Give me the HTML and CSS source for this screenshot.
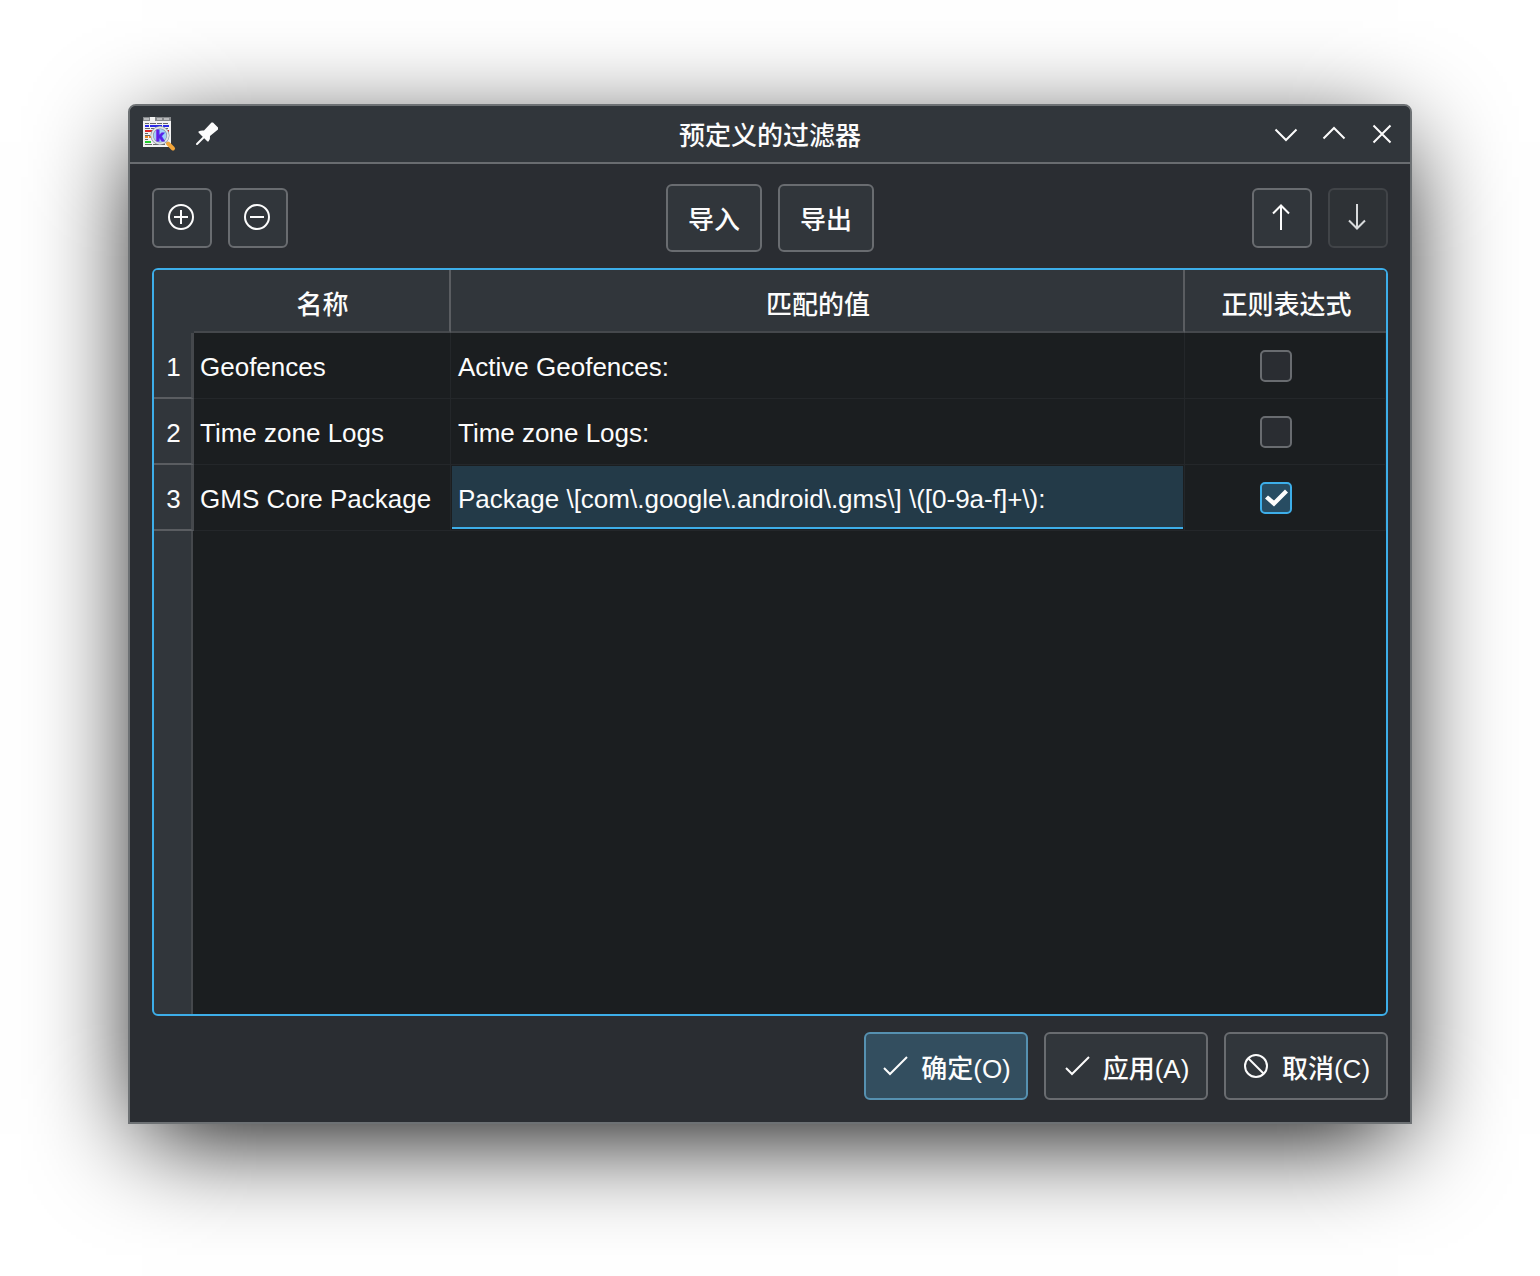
FILE: index.html
```html
<!DOCTYPE html>
<html lang="zh-CN">
<head>
<meta charset="utf-8">
<meta name="viewport" content="width=device-width, initial-scale=1">
<title>预定义的过滤器</title>
<link rel="stylesheet" href="styles.css">
</head>
<body>
<main class="window">
  <header class="titlebar">
    <div class="titlebar-side">
      <svg class="icon" viewBox="0 0 32 32" aria-hidden="true">
        <path fill="#85888b" d="M1 -1h28v4H1z"/>
        <path fill="#b9bbbd" d="M2 0h5v2H2zM15 0h5v2h-5zM22 0h5v2h-5z"/>
        <path fill="#f2f2f2" d="M8 -1h5v4h16v26H1V3h7z"/>
        <path stroke="#666" stroke-width="1" d="M3 5.500h4m1 0h6m1 0h5m1 0h5M3 10.500h5m1 0h8m1 0h8M3 15.500h3M3 17.500h5M3 21.500h3M3 26.500h7m1 0h6m1 0h5"/>
        <path stroke="#2a28e8" stroke-width="2" d="M3 8h4m1 0h12m1 0h6"/>
        <path stroke="#dd2727" stroke-width="2" d="M3 13h8M25 13h2"/>
        <path stroke="#f08c28" stroke-width="2" d="M3 19h3m1 0h2"/>
        <path stroke="#22cc2d" stroke-width="2" d="M3 24h6"/>
        <path stroke="#f4a63a" stroke-width="4" stroke-linecap="round" d="M26 25.500l5 5"/>
        <circle cx="18" cy="17.500" r="8" fill="#a3d0fa" stroke="#7d8a96" stroke-width="3"/>
        <circle cx="18" cy="17.500" r="8" fill="none" stroke="#dfe3e6" stroke-width="2"/>
        <text class="logo-letter" x="18" y="23" text-anchor="middle">k</text>
      </svg>
      <button class="title-button" type="button" aria-label="固定">
        <svg class="icon" viewBox="0 0 32 32" aria-hidden="true">
          <path fill="#fcfcfc" d="M21.500 4.500h1.500l5 5v2l-8 6.500q.5 3-1.500 5.500h-1L8.500 14.500v-1q2.500-1.500 5.500-1z"/>
          <path stroke="#fcfcfc" stroke-width="2" stroke-linecap="round" d="M14 19l-7 7"/>
        </svg>
      </button>
    </div>
    <h1 class="title">预定义的过滤器</h1>
    <div class="titlebar-side titlebar-end">
      <button class="title-button" type="button" aria-label="最小化"><svg class="icon line" viewBox="0 0 32 32" aria-hidden="true"><path d="M5.500 11.500L16 22l10.500-10.500"/></svg></button>
      <button class="title-button" type="button" aria-label="最大化"><svg class="icon line" viewBox="0 0 32 32" aria-hidden="true"><path d="M5.500 20.500L16 10l10.500 10.500"/></svg></button>
      <button class="title-button" type="button" aria-label="关闭"><svg class="icon line" viewBox="0 0 32 32" aria-hidden="true"><path d="M7.500 7.500l17 17M24.500 7.500l-17 17"/></svg></button>
    </div>
  </header>

  <div class="content">
    <div class="toolbar">
      <div class="group">
        <button class="button tool" type="button" aria-label="添加"><svg class="icon line" viewBox="0 0 32 32" aria-hidden="true"><circle cx="15" cy="15" r="12"/><path d="M8 15h14M15 8v14"/></svg></button>
        <button class="button tool" type="button" aria-label="移除"><svg class="icon line" viewBox="0 0 32 32" aria-hidden="true"><circle cx="15" cy="15" r="12"/><path d="M8 15h14"/></svg></button>
      </div>
      <div class="group">
        <button class="button wide" type="button">导入</button>
        <button class="button wide" type="button">导出</button>
      </div>
      <div class="group">
        <button class="button tool" type="button" aria-label="上移"><svg class="icon line" viewBox="0 0 32 32" aria-hidden="true"><path d="M15 28V3M7 11.500l8-8 8 8"/></svg></button>
        <button class="button tool" type="button" aria-label="下移" disabled><svg class="icon line" viewBox="0 0 32 32" aria-hidden="true"><path d="M15 2v25M7 18.500l8 8 8-8"/></svg></button>
      </div>
    </div>

    <div class="filters">
      <table class="grid">
        <colgroup><col class="col-number"><col class="col-name"><col><col class="col-regex"></colgroup>
        <thead>
          <tr><td class="corner"></td><th scope="col">名称</th><th scope="col">匹配的值</th><th scope="col">正则表达式</th></tr>
        </thead>
        <tbody>
          <tr><th scope="row">1</th><td>Geofences</td><td class="value">Active Geofences:</td><td class="check"><input type="checkbox" aria-label="Geofences 正则表达式"></td></tr>
          <tr><th scope="row">2</th><td>Time zone Logs</td><td class="value">Time zone Logs:</td><td class="check"><input type="checkbox" aria-label="Time zone Logs 正则表达式"></td></tr>
          <tr><th scope="row">3</th><td>GMS Core Package</td><td class="value selected">Package \[com\.google\.android\.gms\] \([0-9a-f]+\):</td><td class="check"><input type="checkbox" aria-label="GMS Core Package 正则表达式" checked></td></tr>
        </tbody>
      </table>
    </div>

    <footer class="actions">
      <button class="button action primary" type="button"><svg class="icon line" viewBox="0 0 32 32" aria-hidden="true"><path d="M3 18l6 6L26 7"/></svg><span>确定(O)</span></button>
      <button class="button action" type="button"><svg class="icon line" viewBox="0 0 32 32" aria-hidden="true"><path d="M3 18l6 6L26 7"/></svg><span>应用(A)</span></button>
      <button class="button action" type="button"><svg class="icon line" viewBox="0 0 32 32" aria-hidden="true"><circle cx="14" cy="16" r="11"/><path d="M6 8l16 16"/></svg><span>取消(C)</span></button>
    </footer>
  </div>
</main>
</body>
</html>
```
FILE: styles.css
```css
:root {
  --text: #fcfcfc;
  --surface: #31363b;
  --window: #2a2d32;
  --view: #1b1e20;
  --line: #696c70;
  --header-line: #45484c;
  --grid-line: #24272a;
  --accent: #3daee9;
}

* {
  box-sizing: border-box;
}

body {
  display: flex;
  min-height: 100vh;
  margin: 0;
  padding: 104px 128px 152px;
  background: #fff;
  color: var(--text);
  font: 500 26px/32px "Liberation Sans", "Noto Sans CJK SC", sans-serif;
}

button {
  margin: 0;
  padding: 0;
  color: inherit;
  font: inherit;
}

.window {
  display: flex;
  flex: 1;
  flex-direction: column;
  min-width: 0;
  border: 2px solid #6d7174;
  border-radius: 8px 8px 0 0;
  background: var(--window);
  box-shadow: 0 24px 100px -14px #000;
}

.titlebar {
  display: grid;
  grid-template-columns: 1fr auto 1fr;
  align-items: center;
  height: 58px;
  padding: 0 12px;
  border-bottom: 2px solid var(--line);
  border-radius: 6px 6px 0 0;
  background: var(--surface);
}

.titlebar-side {
  display: flex;
  gap: 16px;
}

.titlebar-end {
  justify-content: flex-end;
}

.title {
  margin: 0;
  padding-top: 4px;
  font: inherit;
}

.title-button {
  display: flex;
  border: 0;
  background: none;
}

.icon {
  display: block;
  flex: none;
  width: 32px;
  height: 32px;
  overflow: visible;
}

.line {
  fill: none;
  stroke: currentColor;
  stroke-width: 2;
}

.logo-letter {
  fill: #5a1fe8;
  stroke: #5a1fe8;
  stroke-width: 1px;
  font: 700 15px "Liberation Sans", sans-serif;
}

.content {
  display: flex;
  flex: 1;
  flex-direction: column;
  gap: 16px;
  padding: 20px 22px 22px;
}

.toolbar {
  display: flex;
  align-items: center;
  justify-content: space-between;
}

.group {
  display: flex;
  gap: 16px;
}

.button {
  display: flex;
  align-items: center;
  justify-content: center;
  gap: 8px;
  height: 68px;
  border: 2px solid var(--line);
  border-radius: 6px;
  background: var(--surface);
}

.tool {
  width: 60px;
  height: 60px;
}

.tool:disabled {
  border-color: #414448;
  background: #2e3236;
  color: #d8dadc;
}

.wide {
  width: 96px;
  padding-top: 4px;
}

.filters {
  flex: 1;
  overflow: hidden;
  border: 2px solid var(--accent);
  border-radius: 6px;
  background: linear-gradient(to right, var(--surface) 37px, var(--header-line) 37px 39px, transparent 39px) var(--view);
}

.grid {
  width: 100%;
  border-collapse: separate;
  border-spacing: 0;
  table-layout: fixed;
}

.grid th,
.grid td {
  height: 66px;
  padding: 2px 6px 0;
  border: 0 solid var(--grid-line);
  font-weight: 500;
  text-align: left;
}

.grid td {
  border-width: 0 1px 1px 0;
}

.grid thead th,
.grid thead td {
  height: 63px;
  padding: 8px 0 0 2px;
  border: 0 solid #5a5d61;
  border-width: 0 2px 2px 0;
  border-bottom-color: var(--header-line);
  background: var(--surface);
  text-align: center;
}

.grid thead th:last-child {
  border-right: 0;
}

.grid thead .corner {
  border: 0;
}

.grid tbody th {
  padding: 4px 0 0 2px;
  border-width: 0 3px 2px 0;
  border-right-color: var(--header-line);
  border-bottom-color: #5a5d61;
  background: var(--surface);
  text-align: center;
}

.grid .value {
  padding-left: 7px;
}

.grid .selected {
  background: linear-gradient(to top, var(--accent) 3px, #233a48 3px);
  box-shadow: inset 0 0 0 1px var(--view);
}

.grid .check {
  padding: 0 18px 0 0;
  text-align: center;
}

.col-number {
  width: 40px;
}

.col-name {
  width: 257px;
}

.col-regex {
  width: 201px;
}

input[type="checkbox"] {
  display: block;
  width: 32px;
  height: 32px;
  margin: 0 auto;
  border: 2px solid var(--line);
  border-radius: 5px;
  background: var(--window);
  appearance: none;
}

input[type="checkbox"]:checked {
  border-color: var(--accent);
  background: #274c62;
}

input[type="checkbox"]:checked::before {
  display: block;
  width: 28px;
  height: 28px;
  background: var(--text);
  clip-path: polygon(3px 15px, 6px 12px, 12px 17px, 23px 6px, 26px 9px, 12px 23px);
  content: "";
}

.actions {
  display: flex;
  justify-content: flex-end;
  gap: 16px;
}

.action {
  width: 164px;
}

.action span {
  padding-top: 6px;
}

.primary {
  border-color: #5691b1;
  background: #334e5f;
}
```
